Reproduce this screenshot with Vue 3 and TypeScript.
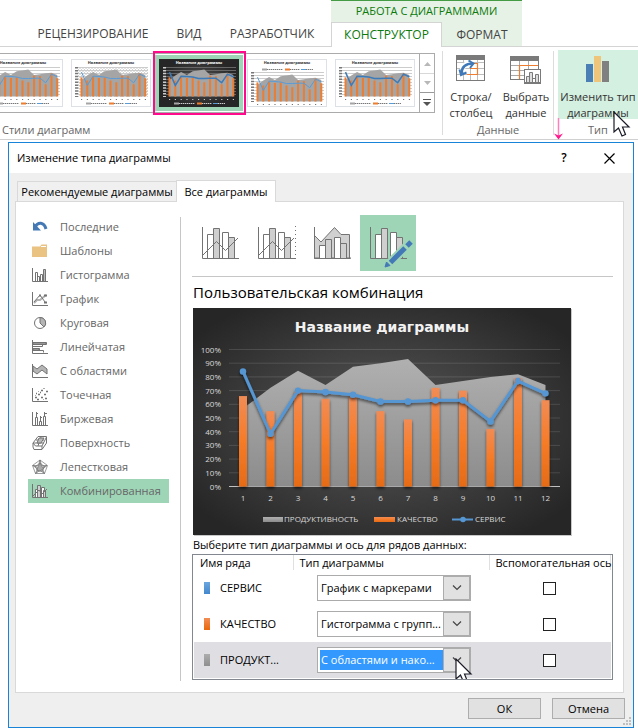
<script setup lang="ts">
import { ref } from 'vue'

interface Series {
  name: string
  type: string
  swatch: string
  secondary: boolean
  options: string[]
}

const area = [57, 72, 84.5, 74, 87.5, 90, 93, 74, 77, 80, 82, 74]
const bars = [66, 55, 69, 64, 66, 55, 49, 72, 70, 42, 79, 63]
const line = [84, 38.5, 70, 69, 67, 62, 62, 63, 63, 47.5, 77, 68]
const ticks = [100, 90, 80, 70, 60, 50, 40, 30, 20, 10, 0]

const px = (i: number) => 50 + 27.5 * i
const py = (v: number) => 178.5 - 1.37 * v
const linePoints = line.map((v, i) => `${px(i)},${py(v)}`).join(' ')
const areaPoints = `${px(0)},${py(0)} ${area.map((v, i) => `${px(i)},${py(v)}`).join(' ')} ${px(11)},${py(0)}`

const tx = (i: number) => 10.5 + 5.8 * i
const ty = (v: number) => 37.5 - 0.29 * v
const thumbLine = line.map((v, i) => `${tx(i)},${ty(v)}`).join(' ')
const thumbArea = `${tx(0)},${ty(0)} ${area.map((v, i) => `${tx(i)},${ty(v)}`).join(' ')} ${tx(11)},${ty(0)}`

const thumbs = ['plain', 'pattern', 'dark', 'low', 'deep']
const activeStyle = ref('dark')

const kinds = [
  { id: 'recent', label: 'Последние' },
  { id: 'templates', label: 'Шаблоны' },
  { id: 'column', label: 'Гистограмма' },
  { id: 'line', label: 'График' },
  { id: 'pie', label: 'Круговая' },
  { id: 'bar', label: 'Линейчатая' },
  { id: 'area', label: 'С областями' },
  { id: 'scatter', label: 'Точечная' },
  { id: 'stock', label: 'Биржевая' },
  { id: 'surface', label: 'Поверхность' },
  { id: 'radar', label: 'Лепестковая' },
  { id: 'combo', label: 'Комбинированная' },
]
const activeKind = ref('combo')

const variants = [
  { id: 'v1', label: 'Гистограмма с группировкой и график' },
  { id: 'v2', label: 'Гистограмма и график на вспомогательной оси' },
  { id: 'v3', label: 'С областями и гистограмма' },
  { id: 'v4', label: 'Пользовательская комбинация' },
]
const activeVariant = ref('v4')

const typeOptions = ['График с маркерами', 'Гистограмма с групп...', 'С областями и нако...']
const series = ref<Series[]>([
  { name: 'СЕРВИС', type: typeOptions[0], swatch: 'blue', secondary: false, options: typeOptions },
  { name: 'КАЧЕСТВО', type: typeOptions[1], swatch: 'orange', secondary: false, options: typeOptions },
  { name: 'ПРОДУКТ...', type: typeOptions[2], swatch: 'gray', secondary: false, options: typeOptions },
])
const activeRow = ref(2)
</script>

<template>
  <div class="page">
    <header class="ribbon">
      <nav class="tabs">
        <div class="tabs-main">
          <a href="#" class="tab">РЕЦЕНЗИРОВАНИЕ</a>
          <a href="#" class="tab">ВИД</a>
          <a href="#" class="tab">РАЗРАБОТЧИК</a>
        </div>
        <div class="context">
          <div class="context-title">РАБОТА С ДИАГРАММАМИ</div>
          <div class="context-tabs">
            <a href="#" class="tab current">КОНСТРУКТОР</a>
            <a href="#" class="tab">ФОРМАТ</a>
          </div>
        </div>
      </nav>

      <div class="groups">
        <section class="group styles">
          <div class="gallery">
            <div class="thumbs">
              <button
                v-for="t in thumbs"
                :key="t"
                type="button"
                class="thumb"
                :class="[t, { on: activeStyle === t }]"
                :aria-label="'Стиль ' + t"
                @click="activeStyle = t"
              >
                <svg viewBox="0 0 80 48" width="80" height="48">
                  <defs>
                    <pattern :id="'hatch-' + t" width="3" height="3" patternUnits="userSpaceOnUse">
                      <path d="M0 0L3 3M3 0L0 3" stroke="#c4c4c4" stroke-width=".5" />
                    </pattern>
                    <radialGradient :id="'tbg-' + t">
                      <stop offset="0" stop-color="#5a5a5a" />
                      <stop offset="1" stop-color="#262626" />
                    </radialGradient>
                  </defs>
                  <rect class="paper" x=".5" y=".5" width="79" height="47" :fill="t === 'dark' ? 'url(#tbg-dark)' : '#fff'" />
                  <text class="thumb-title" x="40" y="5">Название диаграммы</text>
                  <g :transform="t === 'low' ? 'translate(0 5)' : ''">
                    <rect v-if="t === 'pattern'" x="7" y="8" width="70" height="30" fill="url(#hatch-pattern)" />
                    <path class="thumb-grid" d="M7 8.5H77M7 11.5H77M7 14.5H77M7 17.5H77M7 20.5H77M7 23.5H77M7 26.5H77M7 29.5H77M7 32.5H77M7 35.5H77" />
                    <polygon :points="thumbArea" fill="#a5a5a5" />
                    <rect v-for="(v, i) in bars" :key="i" :x="tx(i) - 1" :y="ty(v)" width="2" :height="0.29 * v" fill="#ed7d31" />
                    <polyline :points="thumbLine" fill="none" class="thumb-line" />
                    <path class="thumb-marks" d="M5.500 8V38" stroke-dasharray="1.500 1.400" stroke-width="3" />
                    <path class="thumb-marks" d="M10 40.500H76" stroke-dasharray="1.200 4.600" stroke-width="1" />
                  </g>
                  <g :transform="t === 'low' ? 'translate(0 -34)' : ''">
                    <path d="M15 44.500H20" stroke="#a5a5a5" stroke-width="2" />
                    <path d="M38 44.500H43" stroke="#ed7d31" stroke-width="2" />
                    <path d="M54 44.500H59" stroke="#5b9bd5" stroke-width="1" />
                    <path class="thumb-marks" d="M20 44.500H36M43 44.500H53M59 44.500H66" stroke-dasharray="1.400 .6" stroke-width="1" />
                  </g>
                </svg>
              </button>
            </div>
            <div class="scroller">
              <button type="button" aria-label="Вверх"><svg width="7" height="4" viewBox="0 0 7 4"><path d="M0 4L3.5 0L7 4Z" fill="#b8b8b8" /></svg></button>
              <button type="button" aria-label="Вниз"><svg width="7" height="4" viewBox="0 0 7 4"><path d="M0 0L3.5 4L7 0Z" fill="#b8b8b8" /></svg></button>
              <button type="button" class="more" aria-label="Ещё"><svg width="8" height="7" viewBox="0 0 8 7"><path d="M0 0H8V1H0ZM0 3L4 7L8 3Z" fill="#555" /></svg></button>
            </div>
          </div>
          <div class="caption">Стили диаграмм</div>
        </section>

        <section class="group data">
          <div class="big-buttons">
            <button type="button" class="big">
              <svg width="30" height="30" viewBox="0 0 30 30">
                <rect x=".5" y="1.5" width="28" height="25" fill="#fff" stroke="#7a7a7a" />
                <path d="M1 8.500H28M1 14.500H28M1 20.500H28M7.500 6V26M14.500 6V26M21.500 6V26" stroke="#bdbdbd" fill="none" />
                <rect x="0" y="1" width="29" height="5" fill="#7a7a7a" />
                <path d="M14.500 9.500H21.500V20.500H11M21.500 14.500H14" fill="none" stroke="#ed7d31" stroke-width="1.200" />
                <path d="M6 18C6 12 10 9 15 9" fill="none" stroke="#fff" stroke-width="5" />
                <path d="M5.500 20C5.500 13 9 9.500 17 9.500" fill="none" stroke="#3f78b8" stroke-width="2.500" />
                <path d="M3.500 15.500L5 21L10.500 18.500M12.500 6.500L17.500 9.500L14 14" fill="none" stroke="#3f78b8" stroke-width="2" />
              </svg>
              <span>Строка/<br />столбец</span>
            </button>
            <button type="button" class="big">
              <svg width="32" height="30" viewBox="0 0 32 30">
                <rect x=".5" y="2.500" width="28" height="23" fill="#fff" stroke="#7a7a7a" />
                <path d="M1 11.500H28M1 16.500H28M1 21.500H28M9.500 7V25M18.500 7V25" stroke="#a9a9a9" fill="none" />
                <rect x="0" y="2" width="29" height="5" fill="#7a7a7a" />
                <path d="M9.500 25V11.500H28" fill="none" stroke="#ed7d31" stroke-width="1.200" />
                <rect x="14.500" y="15.500" width="16" height="14" fill="#fff" stroke="#7a7a7a" />
                <path d="M16.500 28.500V22.500H19.500V28.500M19.500 28.500V18.500H22.500V28.500M25.500 28.500V20.500H28.500V28.500ZM15 28.500H30M22.500 24.500H25.500" fill="#ddd" stroke="#7a7a7a" />
              </svg>
              <span>Выбрать<br />данные</span>
            </button>
          </div>
          <div class="caption">Данные</div>
        </section>

        <section class="group kind">
          <button type="button" class="big hot">
            <svg width="24" height="30" viewBox="0 0 24 30">
              <rect x="0" y="10" width="7" height="18" fill="#4a7fb5" />
              <rect x="8" y="2" width="7" height="26" fill="#efc47b" />
              <rect x="16" y="7" width="7" height="21" fill="#808080" />
            </svg>
            <span>Изменить тип<br />диаграммы</span>
          </button>
          <div class="caption">Тип</div>
          <svg class="pink-arrow" width="9" height="22" viewBox="0 0 9 22">
            <path d="M4.500 0V20" stroke="#ff7fbd" stroke-width="1.500" />
            <path d="M0 15.500L4.500 21.500L9 15.500L4.500 17.500Z" fill="#ff1a8c" />
          </svg>
          <svg class="cursor cursor-top" width="18" height="27" viewBox="0 0 18 27">
            <path d="M1 1V21L5.500 17L9 25L12.500 23.500L9.500 16H16Z" fill="#fff" stroke="#1b1b28" stroke-width="1.200" />
          </svg>
        </section>
      </div>
    </header>

    <main class="dialog">
      <div class="titlebar">
        <h1>Изменение типа диаграммы</h1>
        <button type="button" class="help" aria-label="Справка">?</button>
        <button type="button" class="close" aria-label="Закрыть">
          <svg width="11" height="11" viewBox="0 0 11 11"><path d="M.5.5L10.500 10.500M10.500.5L.5 10.500" stroke="#000" stroke-width="1.200" /></svg>
        </button>
      </div>

      <div class="dialog-tabs">
        <button type="button" class="dtab">Рекомендуемые диаграммы</button>
        <button type="button" class="dtab active">Все диаграммы</button>
      </div>

      <div class="panel">
        <ul class="kinds">
          <li v-for="k in kinds" :key="k.id">
            <button type="button" :class="{ chosen: activeKind === k.id }" @click="activeKind = k.id">
              <svg class="kind-icon" width="16" height="16" viewBox="0 0 16 16">
                <g v-if="k.id === 'recent'">
                  <path d="M3 8C6 2.500 12 3 14 10" fill="none" stroke="#4479b5" stroke-width="3" />
                  <path d="M1 3V11.500H9Z" fill="#4479b5" />
                </g>
                <g v-else-if="k.id === 'templates'">
                  <path d="M0 3.500H8L9.500 1.500H15V14H0Z" fill="#eac282" />
                  <path d="M9 3.500H14" stroke="#fff" />
                </g>
                <g v-else-if="k.id === 'column'" class="ink">
                  <path d="M.5 1V14.500H16" />
                  <path d="M3.500 14V5.500H5.500V14M5.500 9.500H7.500V14M8.500 14V7.500H10.500V14" />
                  <path d="M11.500 14V2.500H13.500V14" fill="#bbb" />
                </g>
                <g v-else-if="k.id === 'line'" class="ink">
                  <path d="M.5 1V14.500H16" />
                  <path d="M2 12L5 9L8 9L14 4" stroke="#b0b0b0" stroke-width="2" />
                  <path d="M2 11L8 4L13 11" />
                  <path d="M7 4.500H9M12 11.500H15M12 4.500H15" stroke-width="2" />
                </g>
                <g v-else-if="k.id === 'pie'" class="ink">
                  <circle cx="8" cy="8" r="5.500" />
                  <path d="M8 2.500A5.500 5.500 0 0 1 12 12L8 8Z" fill="#b5b5b5" />
                </g>
                <g v-else-if="k.id === 'bar'" class="ink">
                  <path d="M.5 1V14.500H16" />
                  <path d="M1 3.500H14.500V5.500H1M10.500 5.500V7.500H1M7.500 9.500H1M7.500 9.500V11.500M1 11.500H11.500V13.500" />
                  <path d="M1 3.500H14V5H1ZM1 9.500H7V11H1Z" fill="#bbb" />
                </g>
                <g v-else-if="k.id === 'area'" class="ink">
                  <path d="M.5 1V14.500H16" />
                  <path d="M1 3L5 6L10 2L15 6V11L10 7L5 11L1 8Z" fill="#b5b5b5" />
                </g>
                <g v-else-if="k.id === 'scatter'" class="ink">
                  <path d="M.5 1V14.500H16" />
                  <path d="M3 10.500H5M6 7.500H8M9 3.500H11M12 7.500H14M9 10.500H11M5 12.500H7M14 4.500H16M4 6.500H5M8 5.500H9M13 11.500H15" stroke-width="1.500" />
                  <path d="M6 4.500H7M11 1.500H13M11 12.500H12M3 8.500H4" stroke="#aaa" />
                </g>
                <g v-else-if="k.id === 'stock'" class="ink">
                  <path d="M.5 1V14.500H16" />
                  <path d="M3.500 14V6.500H5.500V14M7.500 14V10.500H9.500V14M11.500 14V5.500H13.500V14M4.500 6V1M8.500 10V5M12.500 5V1" />
                  <path d="M4 2.500H6M8 6.500H10M12 2.500H15" />
                </g>
                <g v-else-if="k.id === 'surface'" class="ink">
                  <path d="M1 8L6 1.500H14.500V8L10 14.500H2L1 12ZM1 8L3.500 11H10L14.500 2M10 11V14M4 5L12 5M2 8H12M9 2L6 11" />
                  <path d="M7 3L5 8H9L12 3Z" fill="#bbb" />
                </g>
                <g v-else-if="k.id === 'radar'" class="ink thin">
                  <path d="M8 1L15.500 6.500L12.500 14.500H3.500L.5 6.500ZM8 4L12.500 7.500L10.500 12H5.500L3.500 7.500Z" />
                  <path d="M8 1V9L15 6.500M8 9L12.500 14.500M8 9L3.500 14.500M8 9L.5 6.500" />
                  <path d="M8 1L9.500 6.500L15 6.500L10.500 10L12.500 14.500L8 11.500L3.500 14.500L5.500 10L1 6.500L6.500 6.500Z" />
                  <path d="M8 4L10 8L12 9L8 12L5 11L6 8Z" fill="#aaa" />
                </g>
                <g v-else class="ink">
                  <path d="M.5 1V14.500H16" />
                  <path d="M3.500 14V6.500H6.500V14M9.500 14V4.500H12.500V14" fill="#fff" />
                  <path d="M5.500 14V2.500H8.500V14M11.500 14V7.500H13.500V14" fill="#d0d0d0" />
                  <path d="M1 13L7 7L10 11L15 6" />
                </g>
              </svg>
              <span>{{ k.label }}</span>
            </button>
          </li>
        </ul>

        <div class="detail">
          <div class="variants">
            <button
              v-for="v in variants"
              :key="v.id"
              type="button"
              :aria-label="v.label"
              :class="{ chosen: activeVariant === v.id }"
              @click="activeVariant = v.id"
            >
              <svg width="56" height="56" viewBox="-6 -6 56 56">
                <g v-if="v.id === 'v3'" class="ink">
                  <path d="M4.500 14.500L11 21L24.500 6.500L31 13.500H39.500V37.500H4.500Z" fill="#d0d0d0" />
                  <path d="M4.500 6V37H41" />
                  <path d="M9.500 37V24.500H15.500V37M24.500 37V16.500H30.500V37" fill="#fff" />
                  <path d="M15.500 37V18.500H21.500V37M30.500 37V22.500H36.500V37" fill="#d0d0d0" />
                  <path d="M4.500 37.500H40.500" />
                </g>
                <g v-else class="ink">
                  <path d="M4.500 6V37.500H41" />
                  <path d="M9.500 37V13.500H15.500V37M24.500 37V11.500H30.500V37" fill="#fff" />
                  <path d="M15.500 37V7.500H21.500V37M30.500 37V16.500H36.500V37" fill="#cfcfcf" />
                  <path v-if="v.id !== 'v4'" d="M4.500 34.500L18.500 20.500L27.500 29.500L40 17" />
                  <path v-if="v.id === 'v2'" d="M41.500 5V38" stroke-dasharray="1 3" />
                  <g v-if="v.id === 'v4'">
                    <path d="M22 44L44 22" stroke="#9fd5b7" stroke-width="9" />
                    <path d="M24.500 41.500L39 27" stroke="#4479b8" stroke-width="5" />
                    <path d="M41 25L45 21" stroke="#4479b8" stroke-width="5" />
                    <path d="M19 46L20.500 41L24 44.500Z" fill="#4479b8" stroke="#4479b8" stroke-linejoin="round" />
                  </g>
                </g>
              </svg>
            </button>
          </div>

          <h2>Пользовательская комбинация</h2>

          <svg class="chart" width="378" height="227" viewBox="0 0 378 227" role="img" aria-label="Название диаграммы">
            <defs>
              <radialGradient id="bg" cx=".5" cy=".5" r=".62">
                <stop offset="0" stop-color="#595959" />
                <stop offset="1" stop-color="#262626" />
              </radialGradient>
              <linearGradient id="g-area" x1="0" y1="0" x2="0" y2="1">
                <stop offset="0" stop-color="#b0b0b0" />
                <stop offset="1" stop-color="#8c8c8c" />
              </linearGradient>
              <linearGradient id="g-bar" x1="0" y1="0" x2="0" y2="1">
                <stop offset="0" stop-color="#f18c55" />
                <stop offset=".5" stop-color="#f67b28" />
                <stop offset="1" stop-color="#e56b17" />
              </linearGradient>
              <filter id="shade" x="-10%" y="-20%" width="120%" height="150%">
                <feDropShadow dx="0" dy="2" stdDeviation="1.500" flood-color="#000" flood-opacity=".6" />
              </filter>
            </defs>
            <rect width="378" height="227" fill="url(#bg)" />
            <text class="chart-title" x="189" y="24">Название диаграммы</text>
            <g v-for="t in ticks" :key="t">
              <path :d="`M36 ${py(t)}H367`" stroke="#fff" :stroke-opacity="t === 0 ? 0.7 : 0.13" />
              <text class="tick y" x="28" :y="py(t) + 3">{{ t }}%</text>
            </g>
            <polygon :points="areaPoints" fill="url(#g-area)" />
            <g filter="url(#shade)">
              <rect v-for="(v, i) in bars" :key="i" :x="px(i) - 4" :y="py(v)" width="8" :height="1.37 * v" fill="url(#g-bar)" />
            </g>
            <g filter="url(#shade)">
              <polyline :points="linePoints" fill="none" stroke="#5596d3" stroke-width="3" stroke-linejoin="round" />
              <circle v-for="(v, i) in line" :key="i" :cx="px(i)" :cy="py(v)" r="3.200" fill="#5596d3" />
            </g>
            <text v-for="(v, i) in line" :key="'x' + i" class="tick x" :x="px(i)" y="193">{{ i + 1 }}</text>
            <rect x="70" y="209" width="20" height="5" fill="url(#g-area)" />
            <text class="tick" x="91" y="214">ПРОДУКТИВНОСТЬ</text>
            <rect x="181" y="209" width="21" height="5" fill="url(#g-bar)" />
            <text class="tick" x="204" y="214">КАЧЕСТВО</text>
            <path d="M259 211.500H280" stroke="#5596d3" stroke-width="2" />
            <circle cx="270" cy="211.500" r="2.800" fill="#5596d3" />
            <text class="tick" x="282" y="214">СЕРВИС</text>
          </svg>

          <p class="hint">Выберите тип диаграммы и ось для рядов данных:</p>

          <div class="table-frame">
            <table>
              <thead>
                <tr>
                  <th class="c-name">Имя ряда</th>
                  <th class="c-type">Тип диаграммы</th>
                  <th class="c-axis">Вспомогательная ось</th>
                </tr>
              </thead>
              <tbody>
                <tr v-for="(s, i) in series" :key="s.name" :class="{ picked: activeRow === i }" @click="activeRow = i">
                  <td>
                    <div class="name"><i class="swatch" :class="s.swatch"></i><label :for="'type-' + i">{{ s.name }}</label></div>
                  </td>
                  <td class="cell-type">
                    <div class="combo">
                      <select :id="'type-' + i" v-model="s.type">
                        <option v-for="o in s.options" :key="o">{{ o }}</option>
                      </select>
                      <span class="arrow">
                        <svg width="10" height="6" viewBox="0 0 10 6"><path d="M1 .5L5 4.500L9 .5" fill="none" stroke="#444" stroke-width="1.200" /></svg>
                      </span>
                      <svg v-if="i === 2" class="cursor cursor-row" width="18" height="27" viewBox="0 0 18 27">
                        <path d="M1 1V21L5.500 17L9 25L12.500 23.500L9.500 16H16Z" fill="#fff" stroke="#1b1b28" stroke-width="1.200" />
                      </svg>
                    </div>
                  </td>
                  <td class="cell-check">
                    <input v-model="s.secondary" type="checkbox" :aria-label="'Вспомогательная ось: ' + s.name" />
                  </td>
                </tr>
              </tbody>
            </table>
          </div>
        </div>
      </div>

      <footer class="actions">
        <button type="button">ОК</button>
        <button type="button">Отмена</button>
        <svg class="grip" width="8" height="8" viewBox="0 0 8 8">
          <path d="M6 0H8V2H6ZM3 3H5V5H3ZM6 3H8V5H6ZM0 6H2V8H0ZM3 6H5V8H3ZM6 6H8V8H6Z" fill="#bfbfbf" />
        </svg>
      </footer>
    </main>
  </div>
</template>

<style>
body {
  margin: 0;
  background: #fff;
}
</style>

<style scoped>
.page {
  min-height: 100vh;
  display: flex;
  flex-direction: column;
  font-family: "Open Sans", "Noto Sans", sans-serif;
  font-size: 11px;
  line-height: 16px;
  color: #000;
}
* {
  box-sizing: border-box;
}
button {
  font: inherit;
  color: inherit;
  margin: 0;
  padding: 0;
  border: 0;
  background: none;
}
svg {
  display: block;
  flex: none;
}
h1, h2, p, ul {
  margin: 0;
  padding: 0;
  font-weight: 400;
}
.ribbon {
  border-bottom: 1px solid #d0d0d0;
}
.tabs {
  display: flex;
  height: 47px;
  border-bottom: 1px solid #d4d4d4;
}
.tabs-main {
  display: grid;
  grid-template-columns: 136px 56px 110px;
  align-items: end;
  width: 331px;
  padding-left: 25px;
}
.tab {
  display: flex;
  align-items: center;
  justify-content: center;
  height: 24px;
  font-size: 12px;
  color: #444;
  text-decoration: none;
}
.context {
  width: 191px;
  height: 46px;
  border-top: 1px solid #439c43;
  background: #e6f2e6;
  color: #0c7a0c;
}
.context-title {
  height: 21px;
  line-height: 20px;
  text-align: center;
}
.context-tabs {
  display: grid;
  grid-template-columns: 111px 80px;
}
.context-tabs .tab {
  height: 25px;
}
.context-tabs .current {
  background: #fff;
  border: 1px solid #d4d4d4;
  border-bottom: 0;
  color: #0c7a0c;
}
.groups {
  display: flex;
  height: 92px;
}
.group {
  display: flex;
  flex-direction: column;
  justify-content: space-between;
}
.caption {
  height: 17px;
  line-height: 16px;
  color: #666;
  text-align: center;
}
.styles {
  flex: 1;
  min-width: 0;
  padding-top: 6px;
}
.styles .caption {
  text-align: left;
  padding-left: 2px;
}
.gallery {
  display: flex;
  height: 60px;
  margin-right: 7px;
  border: 1px solid #ababab;
  border-left: 0;
}
.thumbs {
  flex: 1;
  min-width: 0;
  display: flex;
  justify-content: flex-end;
}
.thumb {
  position: relative;
  flex: none;
  width: 88px;
  height: 56px;
  margin-top: 1px;
  padding: 4px;
}
.thumb.on {
  background: #9fd5b7;
}
.thumb.on::after {
  content: "";
  position: absolute;
  z-index: 1;
  inset: -4px -3px -4px -2px;
  border: 2px solid #ff0a8c;
}
.paper {
  stroke: #dde1e6;
}
.dark .paper {
  stroke: #262626;
}
.thumb-title {
  font-size: 4px;
  font-weight: 700;
  text-anchor: middle;
  fill: #333;
}
.dark .thumb-title {
  fill: #fff;
}
.thumb-grid {
  stroke: #ccc;
  stroke-width: 1;
}
.dark .thumb-grid {
  stroke: #666;
}
.thumb-line {
  stroke: #5b9bd5;
  stroke-width: 1;
}
.dark .thumb-line,
.deep .thumb-line {
  stroke: #3d7ab8;
  stroke-width: 1.5;
}
.thumb-marks {
  stroke: #777;
}
.dark .thumb-marks {
  stroke: #ccc;
}
.scroller {
  width: 15px;
  display: grid;
  grid-template-rows: 20px 19px 19px;
  border-left: 1px solid #ababab;
}
.scroller button {
  display: flex;
  align-items: center;
  justify-content: center;
  border-bottom: 1px solid #d8d8d8;
}
.scroller button:nth-child(2) {
  border-bottom-color: #999;
}
.scroller .more {
  border-bottom: 0;
}
.data {
  width: 111px;
  border-left: 1px solid #dcdcdc;
  margin: 4px 0;
}
.data .caption {
  margin-bottom: -4px;
}
.big-buttons {
  display: grid;
  grid-template-columns: 56px 1fr;
  margin-top: -1px;
}
.big {
  display: flex;
  flex-direction: column;
  align-items: center;
  gap: 5px;
  padding-top: 4px;
  color: #333;
  white-space: nowrap;
}
.kind {
  position: relative;
  width: 85px;
  margin-top: 3px;
  padding-left: 5px;
}
.kind::before {
  content: "";
  position: absolute;
  left: 0;
  top: 1px;
  height: 84px;
  border-left: 1px solid #dcdcdc;
}
.hot {
  height: 69px;
  background: #d4f0e0;
}
.pink-arrow {
  position: absolute;
  left: 1px;
  top: 68px;
}
.cursor {
  position: absolute;
  z-index: 2;
  pointer-events: none;
}
.cursor-top {
  right: 7px;
  top: 61px;
}
.dialog {
  flex: 1;
  display: flex;
  flex-direction: column;
  margin: 2px 4px 0 8px;
  border: 1px solid #1883d7;
  background: #efefef;
}
.titlebar {
  display: flex;
  align-items: center;
  height: 30px;
  padding: 0 18px 0 8px;
  background: #fff;
}
.titlebar h1 {
  flex: 1;
  font-size: 11px;
}
.help {
  width: 12px;
  margin-right: 34px;
  font-weight: 600;
  font-size: 12px;
}
.dialog-tabs {
  display: flex;
  align-items: flex-end;
  height: 28px;
  padding-left: 8px;
}
.dtab {
  height: 20px;
  width: 159px;
  border: 1px solid #d9d9d9;
  border-width: 1px 0 0 1px;
  white-space: nowrap;
  background: #f0f0f0;
}
.dtab.active {
  position: relative;
  z-index: 1;
  width: 100px;
  height: 22px;
  margin-bottom: -1px;
  border-width: 1px 1px 0 1px;
  background: #fff;
}
.panel {
  flex: 1;
  display: flex;
  margin: 0 9px 0 6px;
  border: 1px solid #d9d9d9;
  background: #fff;
}
.kinds {
  width: 165px;
  margin: 15px 0 11px;
  padding: 0 11px 0 12px;
  border-right: 1px solid #c6c6c6;
  list-style: none;
}
.kinds li {
  margin-top: -2px;
  margin-bottom: 2px;
}
.kinds button {
  display: flex;
  align-items: center;
  gap: 12px;
  width: 100%;
  height: 24px;
  padding-left: 4px;
  color: #666;
  white-space: nowrap;
}
.kinds .chosen,
.variants .chosen {
  background: #9fd5b7;
}
.ink {
  fill: none;
  stroke: #737373;
}
.thin {
  stroke-width: .7;
}
.detail {
  flex: 1;
  min-width: 0;
  padding: 13px 10px 11px 11px;
}
.variants {
  display: flex;
  padding-bottom: 5px;
  border-bottom: 1px solid #c6c6c6;
}
.variants button {
  display: flex;
  align-items: center;
  justify-content: center;
  width: 56px;
  height: 56px;
}
h2 {
  padding: 6px 0 7px 1px;
  font-size: 15px;
  line-height: 18px;
}
.chart {
  margin-left: 1px;
  box-shadow: 1px 1px 0 #c8c8c8;
}
.chart-title {
  font-family: "DejaVu Sans", sans-serif;
  font-size: 14px;
  font-weight: 700;
  text-anchor: middle;
  fill: #f2f2f2;
}
.tick {
  font-size: 8px;
  fill: #d9d9d9;
}
.tick.y {
  text-anchor: end;
}
.tick.x {
  text-anchor: middle;
}
.hint {
  padding: 2px 0 1px 1px;
  white-space: nowrap;
}
.table-frame {
  padding: 0 1px 1px;
  border: 1px solid #828790;
  overflow: hidden;
}
table {
  width: 100%;
  table-layout: fixed;
  border-collapse: collapse;
}
th {
  height: 15px;
  line-height: 15px;
  padding: 0 0 0 6px;
  border-right: 1px solid #e0e0e0;
  font-weight: 400;
  text-align: left;
  white-space: nowrap;
}
.c-name {
  width: 99px;
}
.c-type {
  width: 196px;
}
td {
  height: 36px;
  padding: 0;
}
.picked {
  background: #dfdee3;
}
.name {
  display: flex;
  align-items: center;
  gap: 10px;
  padding-left: 10px;
}
.swatch {
  width: 6px;
  height: 12px;
}
.blue {
  background: linear-gradient(#6ca6de, #4388cd);
}
.orange {
  background: linear-gradient(#f38d55, #e8680c);
}
.gray {
  background: linear-gradient(#adadad, #8f8f8f);
}
.cell-type {
  padding-left: 24px;
}
.combo {
  position: relative;
  width: 154px;
}
select {
  appearance: none;
  display: block;
  width: 100%;
  height: 26px;
  padding: 0 28px 0 3px;
  border: 1px solid #ababab;
  border-radius: 0;
  background: #fff;
  font: inherit;
  color: #000;
}
.picked select {
  color: #fff;
  background: #3399ff;
  box-shadow: inset 0 0 0 2px #fff;
}
.arrow {
  position: absolute;
  right: 0;
  top: 0;
  width: 28px;
  height: 26px;
  display: flex;
  align-items: center;
  justify-content: center;
  border: 2px solid #acacac;
  border-left-width: 1px;
  background: #e1e1e1;
  pointer-events: none;
}
.cursor-row {
  left: 138px;
  top: 11px;
}
.cell-check {
  text-align: center;
}
input {
  appearance: none;
  display: block;
  width: 13px;
  height: 13px;
  margin: 0 auto;
  border: 1px solid #222;
  background: #fff;
}
.actions {
  position: relative;
  display: flex;
  justify-content: flex-end;
  gap: 11px;
  padding: 5px 8px 8px;
}
.actions button {
  width: 73px;
  height: 21px;
  border: 1px solid #adadad;
  background: #e1e1e1;
}
.grip {
  position: absolute;
  right: 2px;
  bottom: 2px;
}
</style>
